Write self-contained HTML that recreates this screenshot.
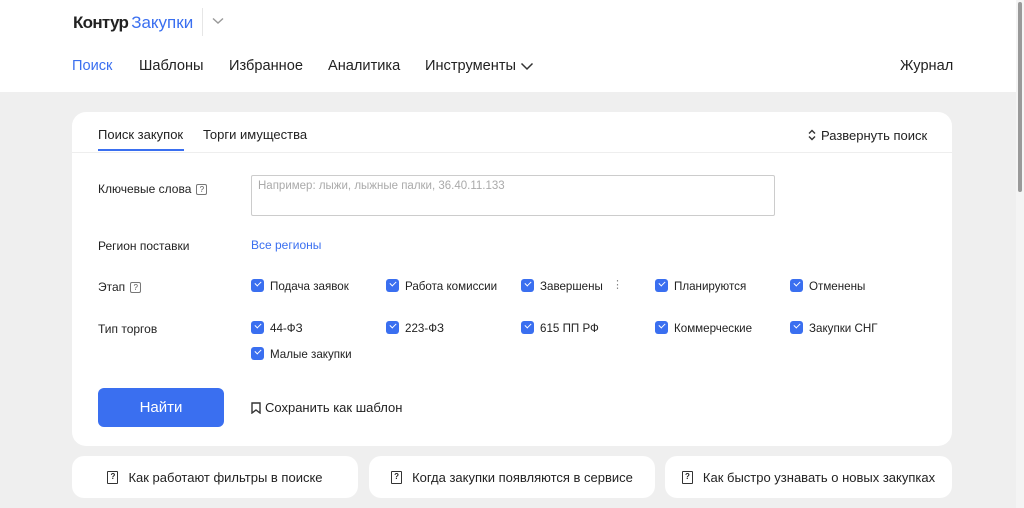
<!DOCTYPE html>
<html><head><meta charset="utf-8"><style>
*{box-sizing:border-box;margin:0;padding:0}
body{width:1024px;height:508px;overflow:hidden;background:#efefef;font-family:"Liberation Sans",sans-serif;color:#222;position:relative}
.a{position:absolute;white-space:nowrap}
header{position:absolute;left:0;top:0;width:1016px;height:92px;background:#fff}
.nav{font-size:14.6px;top:58px}
.card{position:absolute;background:#fff;border-radius:14px}
.lbl{font-size:12px;color:#222}
.cb{position:absolute;font-size:11.6px;white-space:nowrap;padding-left:19px}
.cb:before{content:"";position:absolute;left:0;top:-1px;width:13px;height:13px;border-radius:3px;background:#3a6ff0}
.cb:after{content:"";position:absolute;left:4px;top:1px;width:5px;height:3px;border-left:1.7px solid #fff;border-bottom:1.7px solid #fff;transform:rotate(-45deg)}
.q{display:inline-block;width:11px;height:11px;border:1px solid #777;border-radius:2px;font-size:8px;line-height:9px;text-align:center;color:#555;vertical-align:1px;margin-left:5px}
.bc{position:absolute;top:456px;height:42px;background:#fff;border-radius:12px;font-size:13px;display:flex;align-items:center;justify-content:center}
.bk{display:inline-block;width:11px;height:13px;border:1.5px solid #333;border-radius:1px;margin-right:10px;font-size:8px;line-height:10px;text-align:center;font-weight:bold}
</style></head><body>
<header>
<div class="a" style="left:73px;top:13px;font-size:17px;font-weight:bold;letter-spacing:-0.7px">Контур<span style="color:#3a6ff0;font-weight:normal;margin-left:3px;letter-spacing:0">Закупки</span></div>
<div class="a" style="left:202px;top:8px;width:1px;height:28px;background:#e6e6e6"></div>
<svg class="a" style="left:212px;top:17px" width="12" height="8"><path d="M1 1.5 L6 6 L11 1.5" fill="none" stroke="#999" stroke-width="1.4"/></svg>
<div class="a nav" style="left:72px;color:#3a6ff0">Поиск</div>
<div class="a nav" style="left:139px">Шаблоны</div>
<div class="a nav" style="left:229px">Избранное</div>
<div class="a nav" style="left:328px">Аналитика</div>
<div class="a nav" style="left:425px">Инструменты</div>
<svg class="a" style="left:520px;top:62px" width="14" height="9"><path d="M1.5 1.5 L7 7 L12.5 1.5" fill="none" stroke="#333" stroke-width="1.5"/></svg>
<div class="a nav" style="left:900px">Журнал</div>
</header>
<div class="a" style="left:1016px;top:0;width:8px;height:508px;background:#f4f4f4"></div>
<div class="a" style="left:1018px;top:2px;width:4px;height:190px;background:#999;border-radius:2px"></div>

<div class="card" style="left:72px;top:112px;width:880px;height:334px">
<div class="a" style="left:26px;top:15px;font-size:13px">Поиск закупок</div>
<div class="a" style="left:26px;top:37px;width:86px;height:2px;background:#3a6ff0"></div>
<div class="a" style="left:131px;top:15px;font-size:13px">Торги имущества</div>
<div class="a" style="left:0;top:40px;width:880px;height:1px;background:#eee"></div>
<svg class="a" style="left:736px;top:17px" width="8" height="12"><path d="M1 4.5 L4 1.5 L7 4.5 M1 7.5 L4 10.5 L7 7.5" fill="none" stroke="#333" stroke-width="1.4"/></svg>
<div class="a" style="left:749px;top:16px;font-size:13px">Развернуть поиск</div>

<div class="a lbl" style="left:26px;top:70px">Ключевые слова<span class="q">?</span></div>
<div class="a" style="left:179px;top:63px;width:524px;height:41px;border:1px solid #ccc;border-radius:2px"></div>
<div class="a" style="left:186px;top:69px;font-size:11.5px;color:#aaa;top:68px">Например: лыжи, лыжные палки, 36.40.11.133</div>
<div class="a lbl" style="left:26px;top:127px">Регион поставки</div>
<div class="a" style="left:179px;top:126px;font-size:12px;color:#3a6ff0">Все регионы</div>
<div class="a lbl" style="left:26px;top:168px">Этап<span class="q">?</span></div>
<div class="cb" style="left:179px;top:168px">Подача заявок</div>
<div class="cb" style="left:314px;top:168px">Работа комиссии</div>
<div class="cb" style="left:449px;top:168px">Завершены</div>
<div class="a" style="left:540px;top:166px;font-size:11px;color:#888">⋮</div>
<div class="cb" style="left:583px;top:168px">Планируются</div>
<div class="cb" style="left:718px;top:168px">Отменены</div>
<div class="a lbl" style="left:26px;top:210px">Тип торгов</div>
<div class="cb" style="left:179px;top:210px">44-ФЗ</div>
<div class="cb" style="left:314px;top:210px">223-ФЗ</div>
<div class="cb" style="left:449px;top:210px">615 ПП РФ</div>
<div class="cb" style="left:583px;top:210px">Коммерческие</div>
<div class="cb" style="left:718px;top:210px">Закупки СНГ</div>
<div class="cb" style="left:179px;top:236px">Малые закупки</div>
<div class="a" style="left:26px;top:276px;width:126px;height:39px;background:#3a6ff0;border-radius:6px;color:#fff;font-size:15px;text-align:center;line-height:39px">Найти</div>
<svg class="a" style="left:179px;top:290px" width="10" height="12"><path d="M1 1 H9 V11 L5 8 L1 11 Z" fill="none" stroke="#333" stroke-width="1.4"/></svg>
<div class="a" style="left:193px;top:288px;font-size:13px">Сохранить как шаблон</div>
</div>

<div class="bc" style="left:72px;width:286px"><span class="bk">?</span>Как работают фильтры в поиске</div>
<div class="bc" style="left:369px;width:286px"><span class="bk">?</span>Когда закупки появляются в сервисе</div>
<div class="bc" style="left:665px;width:287px"><span class="bk">?</span>Как быстро узнавать о новых закупках</div>
</body></html>
